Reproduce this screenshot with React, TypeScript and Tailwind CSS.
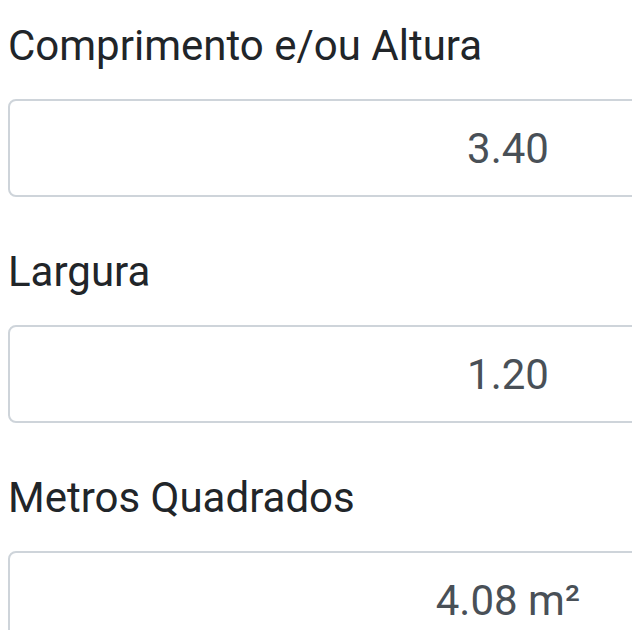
const fields = [
  { label: 'Comprimento e/ou Altura', value: '3.40' },
  { label: 'Largura', value: '1.20' },
  { label: 'Metros Quadrados', value: '4.08 m²' },
]

export default function App() {
  return (
    <div className="w-full h-[630px] overflow-hidden bg-white font-['Roboto',sans-serif]">
      <div className="flex flex-col gap-[43px] pt-[14px] pl-[8px]">
        {fields.map((f) => (
          <div key={f.label} className="flex flex-col">
            <label className="h-[63px] leading-[63px] text-[42px] text-[#212529] whitespace-nowrap">
              {f.label}
            </label>
            <div className="mt-[22px] w-[1000px] h-[98px] shrink-0 rounded-[8px] border-2 border-[#ced4da] flex items-center justify-center text-[42px] text-[#495057]">
              {f.value}
            </div>
          </div>
        ))}
      </div>
    </div>
  )
}
